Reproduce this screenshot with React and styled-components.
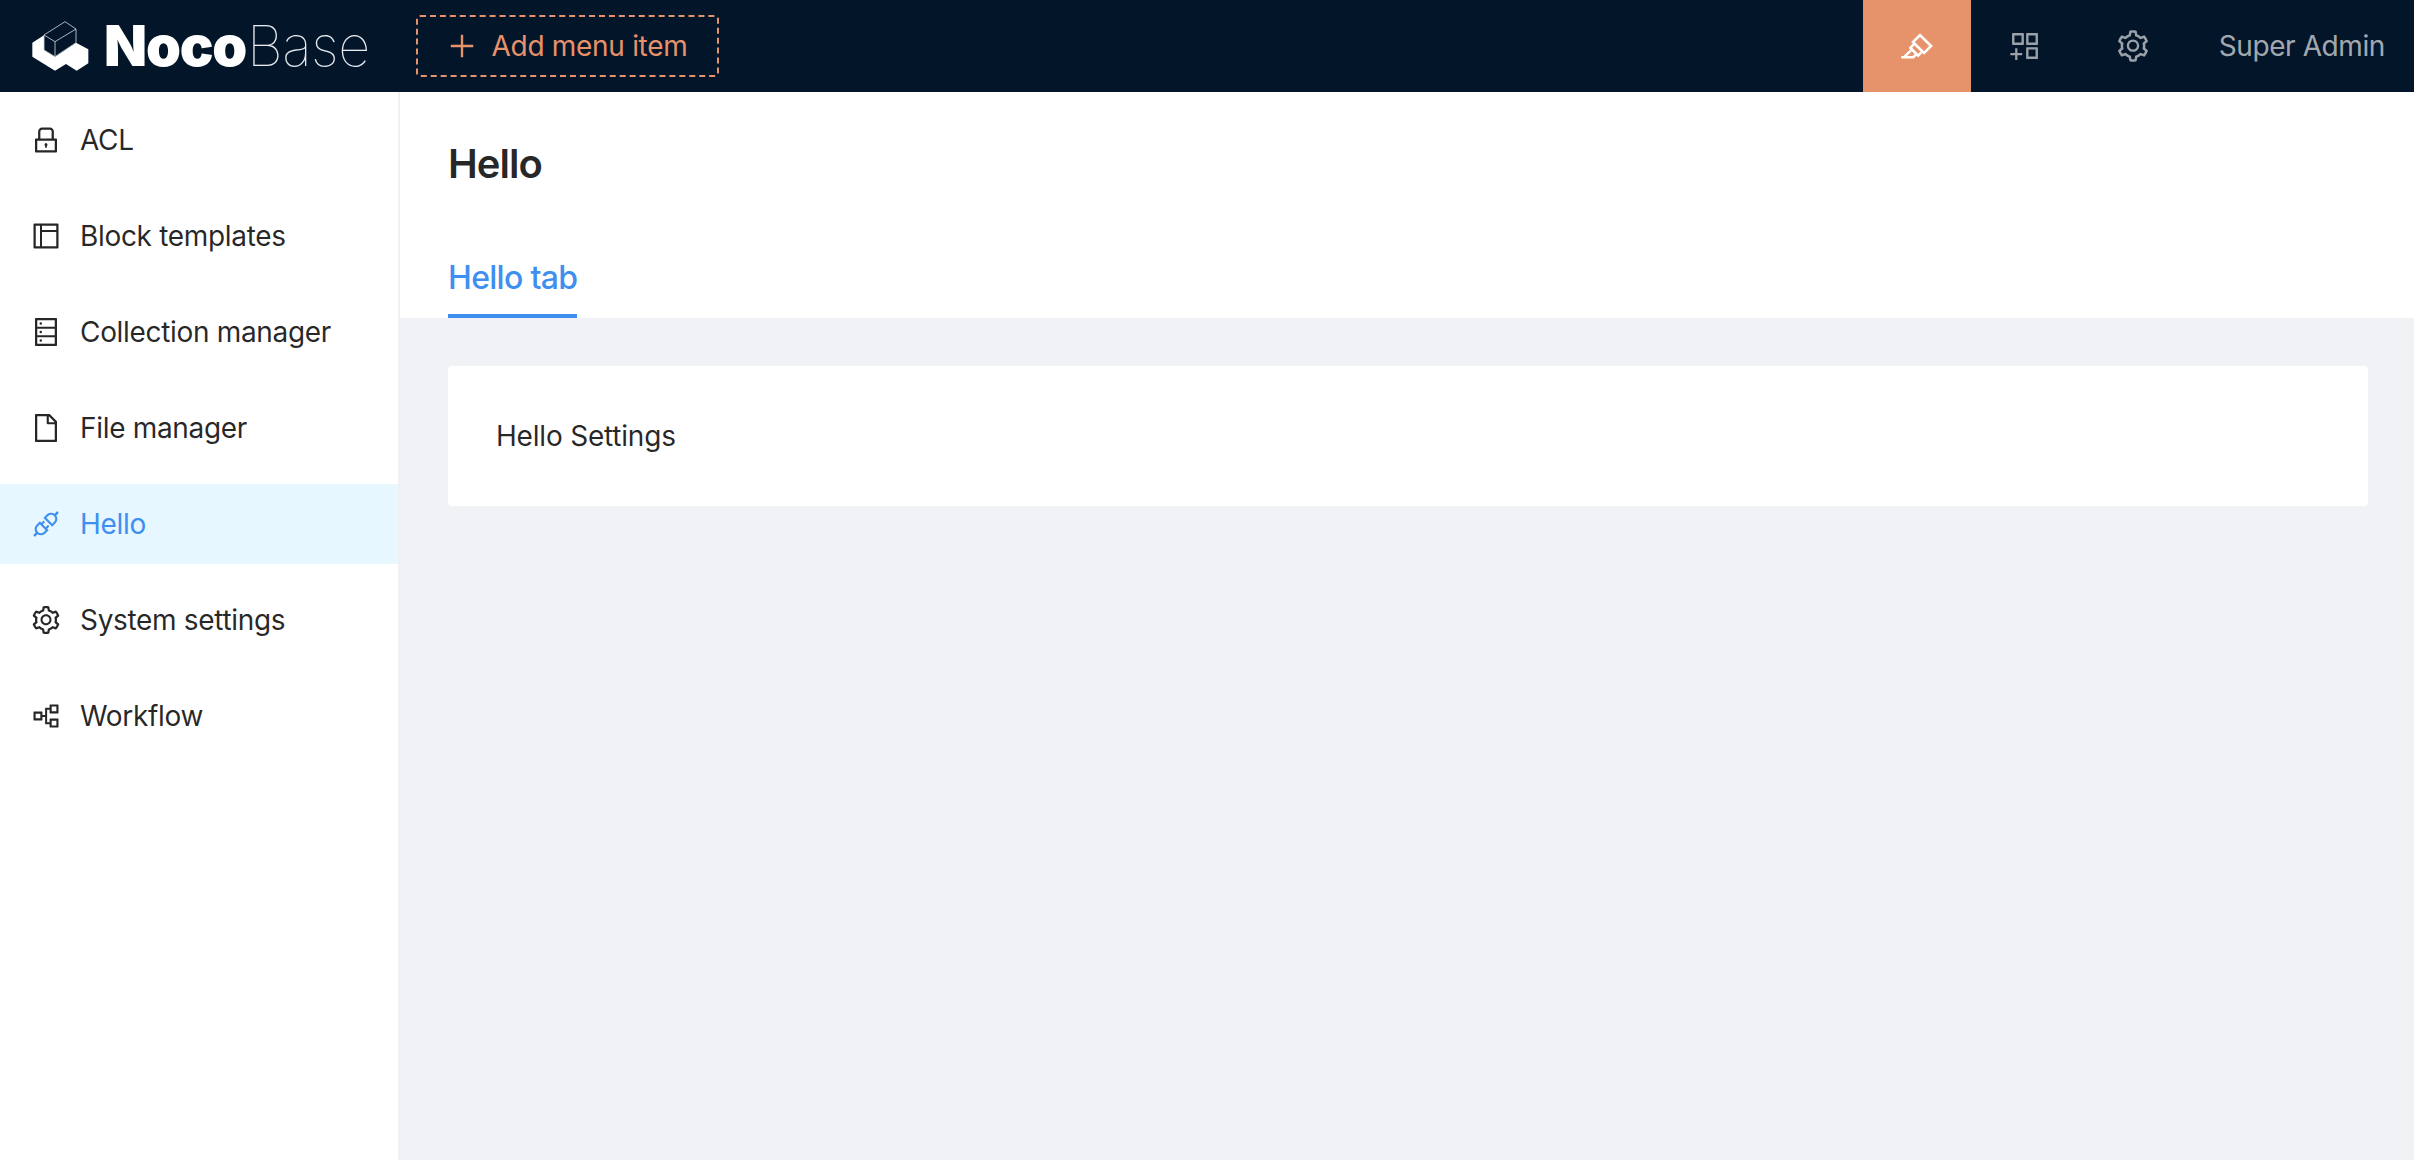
import React from "react";
import styled, { createGlobalStyle } from "styled-components";
import {
  AiOutlineLock, AiOutlineLayout, AiOutlineDatabase, AiOutlineFile, AiOutlineApi,
  AiOutlineSetting, AiOutlinePartition, AiOutlineHighlight, AiOutlineAppstoreAdd, AiOutlinePlus,
} from "react-icons/ai";

const Global = createGlobalStyle`
  html, body { margin: 0; padding: 0; height: 100%; }
  body { font-family: Inter, "Liberation Sans", sans-serif; background: #fff; color: rgba(0,0,0,.85); overflow: hidden; }
  #root { height: 100%; }
`;

const Page = styled.div`
  width: 2414px; height: 1160px; display: flex; flex-direction: column;
`;
const Header = styled.header`
  height: 92px; flex: none; display: flex; align-items: center; background: #031529; padding-left: 30px;
`;
const Logo = styled.div`
  display: flex; align-items: center; width: 386px; flex: none; color: #fff;
`;
const LogoMark = styled.svg`
  width: 60px; height: 52px; flex: none; margin-right: 14px;
`;
const LogoBold = styled.span`
  font-size: 56px; font-weight: 900; letter-spacing: -1.2px; line-height: 1;
`;
const LogoThin = styled.span`
  font-size: 56px; font-weight: 100; letter-spacing: -.6px; line-height: 1; margin-left: 1px; color: #e8ecf0;
`;
const AddButton = styled.button`
  width: 303px; height: 62px; box-sizing: border-box; border: 2px dashed #e6926b; border-radius: 4px; background: transparent;
  color: #e6926b; font: 400 28px Inter, sans-serif; letter-spacing: -.3px; display: flex; align-items: center; justify-content: center; gap: 16px; padding: 0;
  svg { font-size: 32px; margin: 0 -2px; flex: none; }
`;
const HeaderRight = styled.div`
  margin-left: auto; display: flex; align-items: stretch; height: 100%;
`;
const HeaderIcon = styled.div`
  width: 108px; display: flex; align-items: center; justify-content: center; font-size: 36px;
  background: ${p => (p.$active ? "#e6926b" : "transparent")};
  color: ${p => (p.$active ? "#fff" : "rgba(255,255,255,.6)")};
`;
const UserName = styled.div`
  display: flex; align-items: center; font-size: 28px; color: rgba(255,255,255,.65); padding: 0 29px 0 32px; letter-spacing: -.4px;
`;
const Body = styled.div`
  flex: 1; display: flex; min-height: 0;
`;
const Sidebar = styled.nav`
  width: 400px; flex: none; box-sizing: border-box; background: #fff; border-right: 2px solid #f0f0f0; padding-top: 8px;
  display: flex; flex-direction: column; gap: 16px;
`;
const MenuItem = styled.div`
  height: 80px; display: flex; align-items: center; padding-left: 32px; gap: 20px; font-size: 28px; letter-spacing: -.32px;
  background: ${p => (p.$active ? "#e6f7ff" : "transparent")};
  color: ${p => (p.$active ? "#3f8ff0" : "rgba(0,0,0,.85)")};
  svg { font-size: 32px; margin: 0 -2px; flex: none; }
`;
const Main = styled.main`
  flex: 1; min-width: 0; background: #f0f2f5; display: flex; flex-direction: column;
`;
const PageHeader = styled.div`
  height: 226px; box-sizing: border-box; background: #fff; padding: 0 48px; display: flex; flex-direction: column; flex: none;
`;
const Title = styled.h1`
  margin: 0; padding-top: 44px; font-size: 40px; line-height: 56px; font-weight: 600; letter-spacing: -1px; color: rgba(0,0,0,.85);
`;
const Tabs = styled.div`
  margin-top: auto; display: flex;
`;
const Tab = styled.div`
  font-size: 32px; font-weight: 500; letter-spacing: -.7px; color: #3f8ff0; height: 70px; box-sizing: border-box; padding-top: 10px; line-height: 40px; border-bottom: 4px solid #3f8ff0;
`;
const Content = styled.div`
  padding: 48px;
`;
const Card = styled.section`
  background: #fff; border-radius: 4px; height: 140px; box-sizing: border-box; padding: 0 48px; display: flex; align-items: center; font-size: 28px; letter-spacing: -.2px; width: 1920px;
`;

const menu = [
  ["ACL", AiOutlineLock],
  ["Block templates", AiOutlineLayout],
  ["Collection manager", AiOutlineDatabase],
  ["File manager", AiOutlineFile],
  ["Hello", AiOutlineApi, true],
  ["System settings", AiOutlineSetting],
  ["Workflow", AiOutlinePartition],
];

export default function App() {
  return (
    <Page>
      <Global />
      <Header>
        <Logo>
          <LogoMark viewBox="30 30 180 156">
            <path fill="#fff" d="M37 98 72 76V120L105 140 168 98 205 118V160L170 182 138 162 105 182 37 140Z" />
            <path fill="#031529" stroke="#cfd6dc" strokeWidth="2.5" strokeLinejoin="round" d="M72 75 135 35 168 57V98L105 140 72 120ZM72 75 105 95 168 57M105 95V140" />
          </LogoMark>
          <LogoBold>Noco</LogoBold>
          <LogoThin>Base</LogoThin>
        </Logo>
        <AddButton><AiOutlinePlus />Add menu item</AddButton>
        <HeaderRight>
          <HeaderIcon $active><AiOutlineHighlight /></HeaderIcon>
          <HeaderIcon><AiOutlineAppstoreAdd /></HeaderIcon>
          <HeaderIcon><AiOutlineSetting /></HeaderIcon>
          <UserName>Super Admin</UserName>
        </HeaderRight>
      </Header>
      <Body>
        <Sidebar>
          {menu.map(([label, Icon, active]) => (
            <MenuItem key={label} $active={active}><Icon />{label}</MenuItem>
          ))}
        </Sidebar>
        <Main>
          <PageHeader>
            <Title>Hello</Title>
            <Tabs><Tab>Hello tab</Tab></Tabs>
          </PageHeader>
          <Content>
            <Card>Hello Settings</Card>
          </Content>
        </Main>
      </Body>
    </Page>
  );
}
